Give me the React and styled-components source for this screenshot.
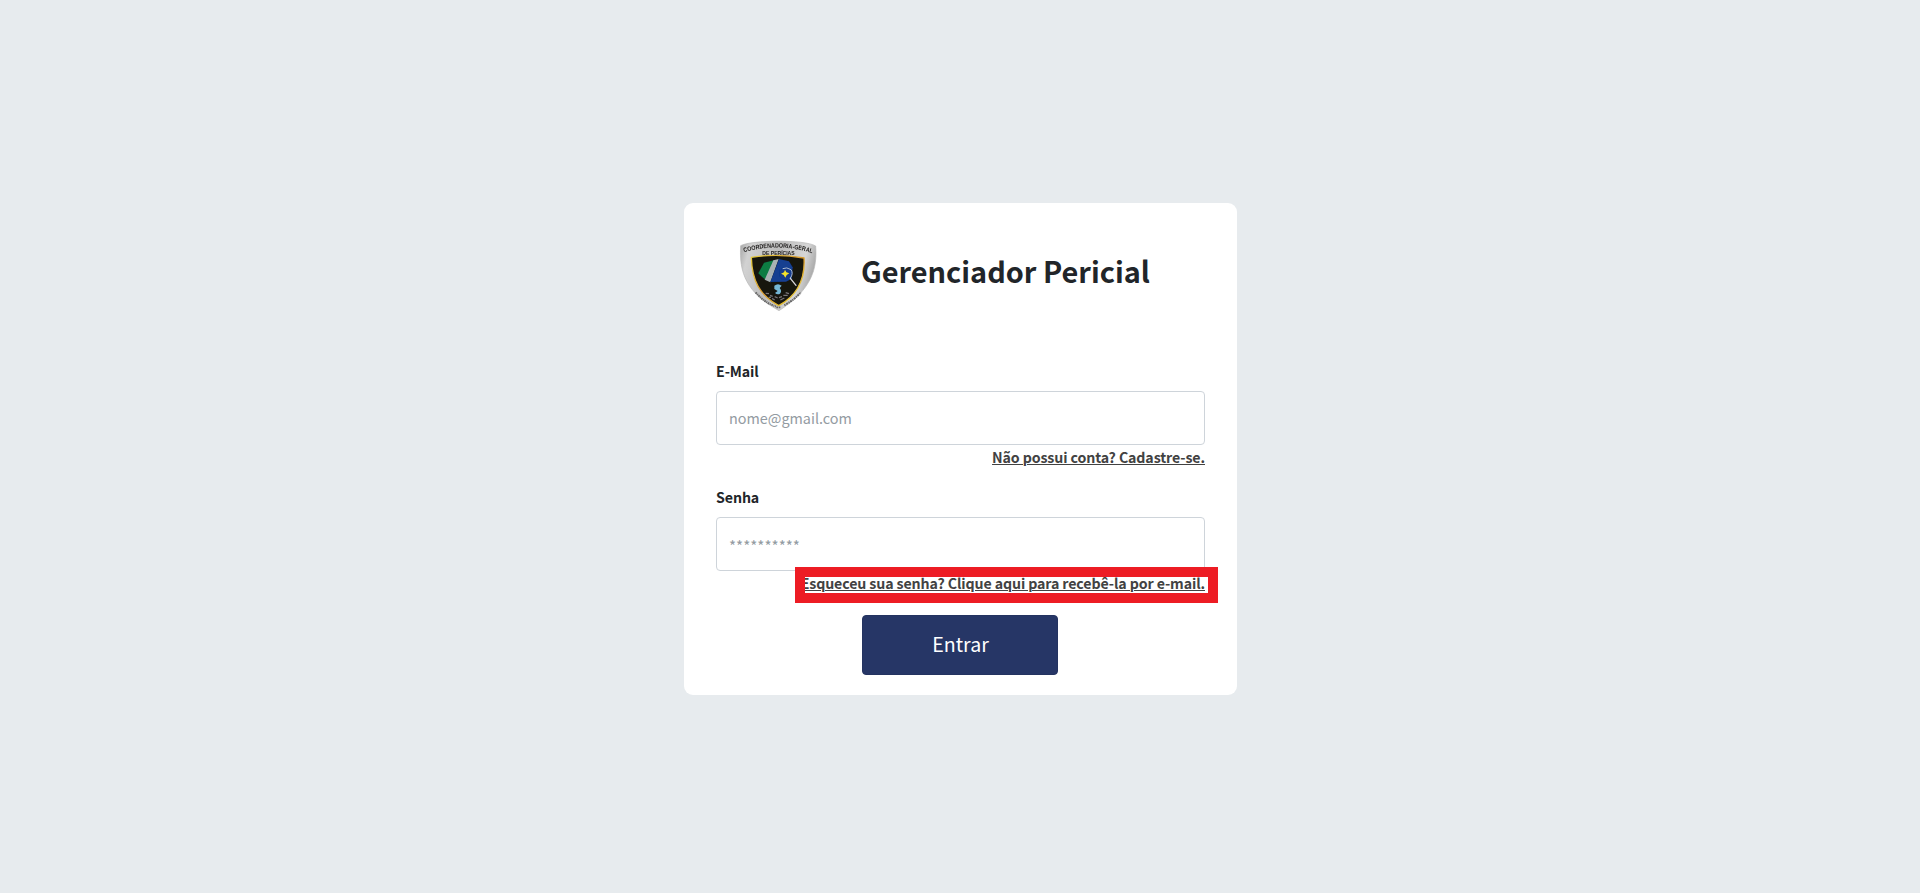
import React from "react";
import styled, { createGlobalStyle } from "styled-components";

const GlobalStyle = createGlobalStyle`
  *, *::before, *::after { box-sizing: border-box; }
  body {
    margin: 0;
    background: #e7ebee;
    color: #212529;
    font-family: "Noto Sans CJK JP", "Noto Sans", sans-serif;
  }
`;

const Page = styled.main`
  min-height: 893px;
  padding-top: 203px;
  display: flex;
  justify-content: center;
  align-items: flex-start;
`;

const Card = styled.form`
  width: 553px;
  height: 492px;
  padding: 22px 32px 20px;
  margin-left: 1px;
  border-radius: 9px;
  background: #fff;
  display: flex;
  flex-direction: column;
`;

const Header = styled.header`
  height: 129px;
  display: flex;
  align-items: flex-start;
  padding-left: 4px;
`;

const Title = styled.h1`
  margin: 25px 0 0 21px;
  font-size: 28.9px;
  line-height: 40px;
  font-weight: 700;
  white-space: nowrap;
`;

const Field = styled.div`
  height: 126px;
  display: flex;
  flex-direction: column;
`;

const Label = styled.label`
  height: 37px;
  padding-top: 7px;
  font-size: 14.2px;
  line-height: 20px;
  letter-spacing: -0.1px;
  font-weight: 700;
`;

const Input = styled.input`
  width: 100%;
  height: 54px;
  padding: ${({ type }) => (type === "password" ? "2px 12px 0" : "0 12px 2px")};
  border: 1px solid #ced4da;
  border-radius: 4px;
  background: #fff;
  font-family: inherit;
  font-size: ${({ type }) => (type === "password" ? "15.2px" : "14.4px")};
  outline: none;

  &::placeholder {
    color: #939ba2;
    opacity: 1;
  }
`;

const LinkRow = styled.div`
  position: relative;
  display: flex;
  justify-content: flex-end;
  padding-top: 2px;
`;

const TextLink = styled.a`
  color: #424242;
  font-size: 14.2px;
  line-height: 20px;
  letter-spacing: -0.11px;
  font-weight: 700;
  white-space: nowrap;
  text-decoration: underline;
  text-decoration-thickness: 1px;
  text-underline-offset: 1px;
`;

const Highlight = styled.span`
  position: absolute;
  top: -4px;
  right: -13px;
  width: 423px;
  height: 36px;
  border: 10px solid #ed1c24;
  pointer-events: none;
`;

const SubmitButton = styled.button`
  align-self: center;
  width: 196px;
  height: 60px;
  margin: 9px 1px 0 0;
  padding: 0 0 2px 1px;
  flex: none;
  border: 1px solid #243360;
  border-radius: 4px;
  background: #263666;
  color: #fff;
  font-family: inherit;
  font-size: 19.6px;
  line-height: 30px;
`;

const CrestSvg = styled.svg`
  flex: none;
  display: block;
`;

function Crest() {
  return (
    <CrestSvg width="120" height="100" viewBox="0 0 360 300" role="img">
      <defs>
        <linearGradient id="silver" x1="0" x2="1" y1="0" y2="0.25">
          <stop offset="0" stopColor="#a5a5a5" />
          <stop offset="0.14" stopColor="#d2d2d2" />
          <stop offset="0.5" stopColor="#bdbdbd" />
          <stop offset="0.86" stopColor="#d6d6d6" />
          <stop offset="1" stopColor="#adadad" />
        </linearGradient>
        <linearGradient id="gold" x1="0" x2="1" y1="0" y2="1">
          <stop offset="0" stopColor="#e5cf42" />
          <stop offset="0.5" stopColor="#d99b2e" />
          <stop offset="1" stopColor="#eddc35" />
        </linearGradient>
        <path id="arcTop" d="M72 82 Q176 51 284 87" />
        <filter id="soften" x="-5%" y="-5%" width="110%" height="110%">
          <feGaussianBlur stdDeviation="1.9" />
        </filter>
      </defs>
      <g filter="url(#soften)">
        <path
          d="M62 62 C92 45 255 43 287 63 C292 129 277 193 177 257 C79 203 57 143 62 62Z"
          fill="url(#silver)"
          stroke="#b5b5b5"
          strokeWidth="2"
        />
        <path
          d="M94 97 Q173 84 252 99 C256 163 230 212 176 242 C119 210 96 168 94 97Z"
          fill="#17130f"
          stroke="url(#gold)"
          strokeWidth="4"
        />
        <path d="M115 145 L132 113 L164 105 L136 164 Q125 156 115 145Z" fill="#087b43" />
        <path d="M160 106 L176 102 L151 172 L134 164Z" fill="#a9b3b3" />
        <path d="M177 102 L207 109 L218 127 L215 161 L198 170 L151 171Z" fill="#123f91" />
        <circle cx="196" cy="146" r="19" fill="#123a8c" />
        <path d="M188 131 Q200 125 213 134 Q221 146 211 159" fill="none" stroke="#b0bdd2" strokeWidth="3" />
        <path d="M211 160 L228 181" stroke="#d8d8d8" strokeWidth="4" strokeLinecap="round" />
        <path d="M195 134 L199 142 L208 145 L200 150 L196 158 L191 150 L183 146 L192 142Z" fill="#f3e22b" />
        <path d="M163 182 Q174 173 185 182 L179 189 Q187 198 180 206 Q172 210 165 204 L173 198 L163 192Z" fill="#74b8d5" />
        <path
          d="M137 205 l10 1 M150 211 l8 3 M146 217 l7 0 M164 215 l9 4 M177 218 l9 -3 M190 211 l13 0 M197 203 l10 3 M181 225 l12 -6 M156 220 l8 5"
          stroke="#777676"
          strokeWidth="4"
          fill="none"
        />
        <g fill="#22201f" fontFamily="Liberation Sans, sans-serif" fontWeight="700">
          <text fontSize="19">
            <textPath href="#arcTop" textLength="208" lengthAdjust="spacingAndGlyphs">COORDENADORIA-GERAL</textPath>
          </text>
          <text x="127" y="91" fontSize="17" textLength="97" lengthAdjust="spacingAndGlyphs">DE PERÍCIAS</text>
        </g>
        <path d="M107 202 Q132 233 168 244" fill="none" stroke="#666" strokeWidth="6" strokeDasharray="5 2 3 2" />
        <path d="M193 241 Q225 223 242 202" fill="none" stroke="#666" strokeWidth="6" strokeDasharray="4 2 6 2" />
        <path d="M169 247 h13" stroke="#666" strokeWidth="5" strokeDasharray="5 2" />
      </g>
    </CrestSvg>
  );
}

export default function App() {
  return (
    <>
      <GlobalStyle />
      <Page>
        <Card onSubmit={(event) => event.preventDefault()}>
          <Header>
            <Crest />
            <Title>Gerenciador Pericial</Title>
          </Header>
          <Field>
            <Label htmlFor="email">E-Mail</Label>
            <Input id="email" type="email" placeholder="nome@gmail.com" />
            <LinkRow>
              <TextLink href="#cadastro">Não possui conta? Cadastre-se.</TextLink>
            </LinkRow>
          </Field>
          <Field>
            <Label htmlFor="senha">Senha</Label>
            <Input id="senha" type="password" placeholder="**********" />
            <LinkRow>
              <TextLink href="#recuperar">Esqueceu sua senha? Clique aqui para recebê-la por e-mail.</TextLink>
              <Highlight />
            </LinkRow>
          </Field>
          <SubmitButton type="submit">Entrar</SubmitButton>
        </Card>
      </Page>
    </>
  );
}
